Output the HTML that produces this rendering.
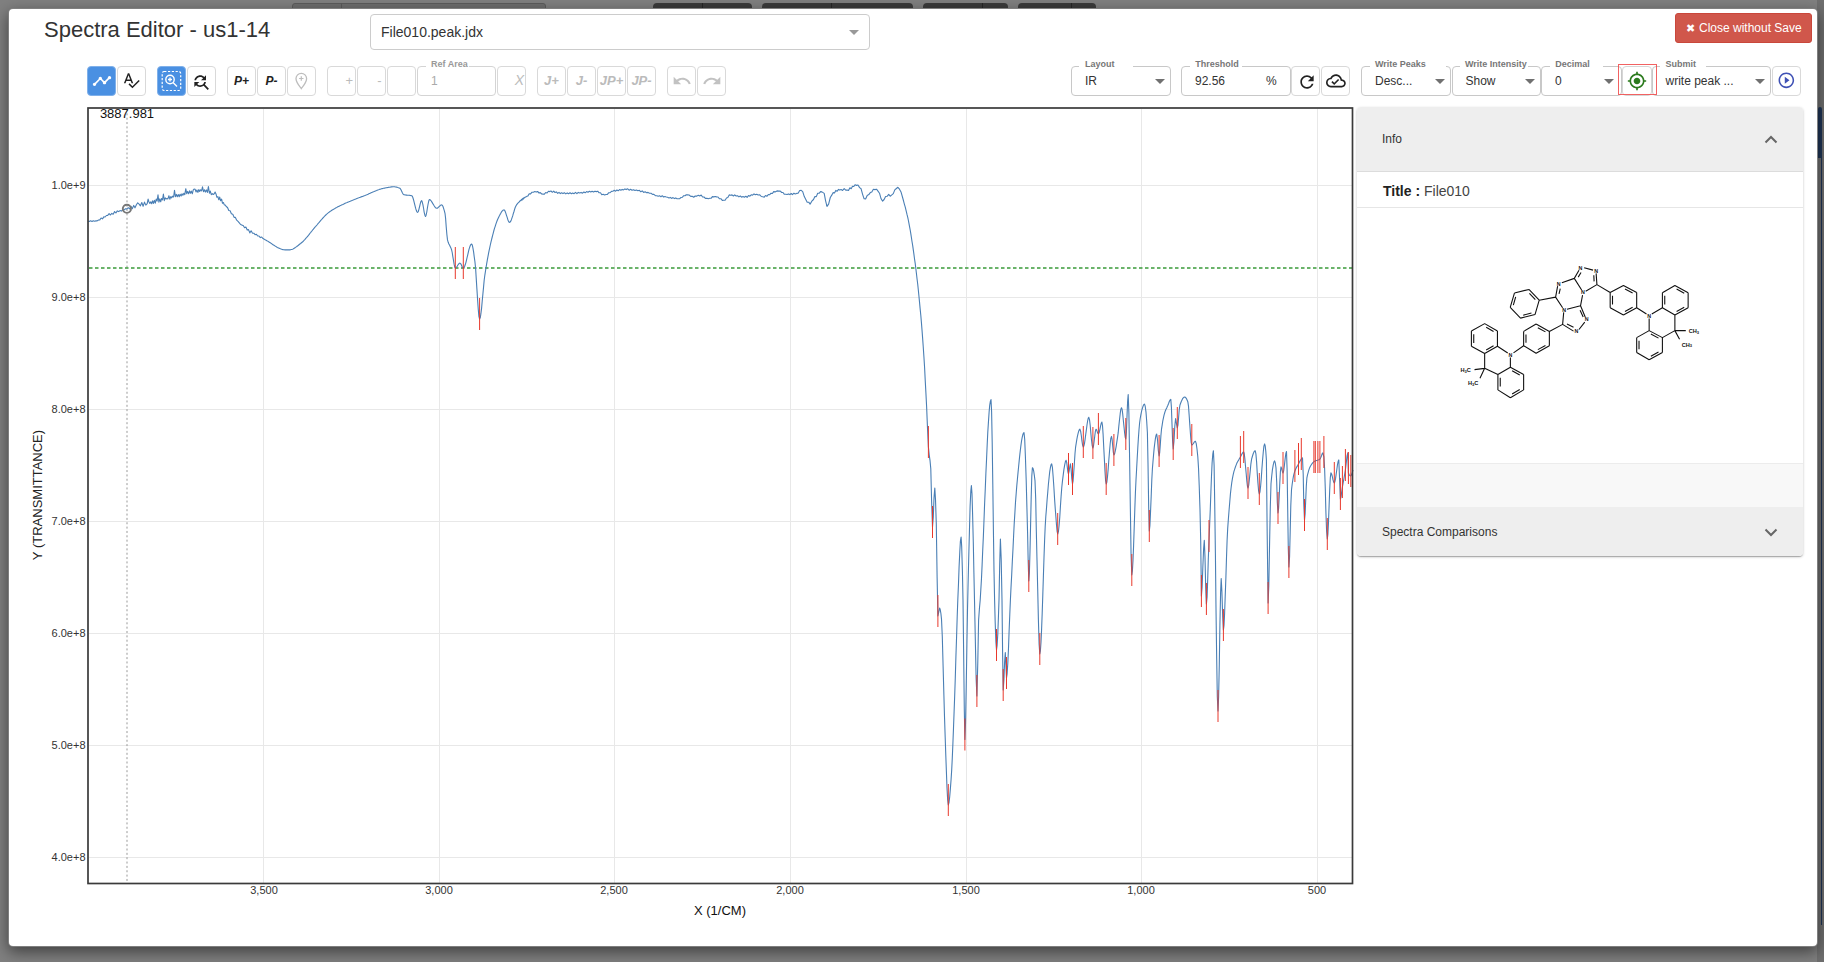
<!DOCTYPE html>
<html><head><meta charset="utf-8">
<style>
*{box-sizing:border-box}
html,body{margin:0;padding:0;width:1824px;height:962px;overflow:hidden}
body{background:#808080;font-family:"Liberation Sans",sans-serif;position:relative;color:#333}
.a{position:absolute}
.tab{position:absolute;top:3px;height:8px;background:#3b3b3b;border-radius:4px 4px 0 0}
.modal{position:absolute;left:8px;top:8px;width:1810px;height:939px;background:#fff;border-radius:5px;border:1px solid rgba(0,0,0,.5);box-shadow:0 5px 15px rgba(0,0,0,.5)}
.btn{position:absolute;top:66px;width:29px;height:29.5px;border:1px solid #d9d9d9;border-radius:4px;background:#fff}
.btn.on{background:#4a90e2;border-color:#7fb0ea}
.bt{position:absolute;left:0;top:0;width:100%;height:100%;display:flex;align-items:center;justify-content:center;font-weight:bold;font-style:italic;font-size:13px}
.fld{position:absolute;top:66px;height:29.5px;border:1px solid #c8c8c8;border-radius:4px;background:#fff}
.lbl{position:absolute;top:-9px;font-size:9px;font-weight:bold;color:#777;line-height:12px;white-space:nowrap}
.gap{position:absolute;top:-1.5px;height:3px;background:#fff}
.val{position:absolute;top:7px;font-size:12px;color:#333;line-height:14px;white-space:nowrap}
.caret{position:absolute;top:12px;width:0;height:0;border-left:5px solid transparent;border-right:5px solid transparent;border-top:5px solid #707070}
.ytick{position:absolute;font-size:11px;color:#333;text-align:right;width:61.5px;line-height:12px}
.xtick{position:absolute;top:884.3px;font-size:11px;color:#333;text-align:center;width:60px;line-height:12px}
</style></head>
<body>
<!-- background page elements behind modal -->
<div class="a" style="left:292px;top:3px;width:254px;height:8px;background:#6e6e6e;border:1px solid #5c5c5c;border-radius:3px 3px 0 0"></div>
<div class="tab" style="left:653px;width:99px"></div>
<div class="tab" style="left:762px;width:151px"></div>
<div class="tab" style="left:923px;width:85px"></div>
<div class="tab" style="left:1018px;width:78px"></div>
<div class="a" style="left:341px;top:3px;width:1px;height:6px;background:#5a5a5a"></div>
<div class="a" style="left:702px;top:3px;width:1px;height:6px;background:#262626"></div>
<div class="a" style="left:831px;top:3px;width:1px;height:6px;background:#262626"></div>
<div class="a" style="left:982px;top:3px;width:1px;height:6px;background:#262626"></div>
<div class="a" style="left:1071px;top:3px;width:1px;height:6px;background:#262626"></div>
<div class="a" style="left:1817px;top:0;width:7px;height:962px;background:#6f6f6f"></div>
<div class="a" style="left:1818px;top:107px;width:4px;height:51px;background:#1f3556;border-radius:2px 2px 0 0"></div>
<div class="a" style="left:1821px;top:157px;width:1px;height:768px;background:#1f3556"></div>

<div class="modal"></div>

<!-- header -->
<div class="a" style="left:44px;top:15.5px;font-size:22px;color:#333;line-height:28px;white-space:nowrap">Spectra Editor - us1-14</div>
<div class="a" style="left:370px;top:14px;width:500px;height:36px;border:1px solid #cccccc;border-radius:4px;background:#fff">
  <div class="a" style="left:10px;top:9px;font-size:14px;color:#333;line-height:16px">File010.peak.jdx</div>
  <div class="a" style="left:478px;top:15px;width:0;height:0;border-left:5px solid transparent;border-right:5px solid transparent;border-top:5px solid #999"></div>
</div>
<div class="a" style="left:1675px;top:13px;width:137px;height:30px;background:#d0574b;border:1px solid #c9473b;border-radius:3px;color:#fff;font-size:12px;line-height:28px;white-space:nowrap">
  <span class="a" style="left:10px;top:0;font-size:11px">&#x2716;</span><span class="a" style="left:23px;top:0">Close without Save</span>
</div>

<!-- toolbar left -->
<div class="btn on" style="left:87px"><svg class="a" style="left:3.6px;top:3.6px" width="20" height="20" viewBox="0 0 24 24"><path fill="#fff" d="M23 8c0 1.1-.9 2-2 2-.18 0-.35-.02-.51-.07l-3.56 3.55c.05.16.07.34.07.52 0 1.1-.9 2-2 2s-2-.9-2-2c0-.18.02-.36.07-.52l-2.550-2.55c-.16.05-.34.07-.52.07s-.36-.02-.52-.07l-4.55 4.56c.05.16.07.33.07.51 0 1.1-.9 2-2 2s-2-.9-2-2 .9-2 2-2c.18 0 .35.02.51.07l4.56-4.55C8.02 9.36 8 9.18 8 9c0-1.1.9-2 2-2s2 .9 2 2c0 .18-.02.36-.07.52l2.55 2.55c.16-.05.34-.07.52-.07s.36.02.52.07l3.55-3.56C19.02 8.35 19 8.18 19 8c0-1.1.9-2 2-2s2 .9 2 2z"/></svg></div>
<div class="btn" style="left:117px"><svg class="a" style="left:4.3px;top:4.1px" width="18.5" height="18.5" viewBox="0 0 24 24"><path fill="#222" d="M12.45 16h2.09L9.43 3H7.57L2.46 16h2.09l1.12-3h5.64l1.14 3zm-6.02-5L8.5 5.48 10.57 11H6.43zm15.16.59l-8.09 8.09L9.83 16l-1.41 1.41 5.09 5.09L23 13l-1.41-1.41z"/></svg></div>
<div class="btn on" style="left:157px"><svg class="a" style="left:0;top:0" width="27" height="27" viewBox="0 0 27 27"><rect x="4.2" y="4.5" width="18.5" height="19" rx="2" fill="none" stroke="#fff" stroke-width="1.2" stroke-dasharray="2.2,1.6"/><circle cx="12" cy="12.5" r="4.2" fill="none" stroke="#fff" stroke-width="1.4"/><path d="M12 10.5V14.5M10 12.5H14M15 15.5L19 19.5" stroke="#fff" stroke-width="1.4"/></svg></div>
<div class="btn" style="left:187px"><svg class="a" style="left:3.1px;top:4.6px" width="20" height="20" viewBox="0 0 24 24"><path fill="#222" d="M11 6c1.38 0 2.63.56 3.54 1.46L12 10h6V4l-2.05 2.05C14.68 4.78 12.93 4 11 4c-3.53 0-6.43 2.61-6.92 6H6.1c.46-2.28 2.48-4 4.9-4zm5.64 9.14c.66-.9 1.12-1.97 1.28-3.14H15.9c-.46 2.28-2.48 4-4.900 4-1.38 0-2.63-.56-3.54-1.46L10 12H4v6l2.05-2.05C7.32 17.220 9.07 18 11 18c1.55 0 2.98-.51 4.14-1.36L20 21.49 21.49 20l-4.85-4.86z"/></svg></div>
<div class="btn" style="left:227px"><div class="bt" style="color:#222;font-size:12px">P+</div></div>
<div class="btn" style="left:257px"><div class="bt" style="color:#222;font-size:12px">P-</div></div>
<div class="btn" style="left:287px"><svg class="a" style="left:0;top:0" width="27" height="27" viewBox="0 0 27 27"><path d="M13.3 21.6C11 18.6 8 15.6 8 11.6A5.3 5.3 0 0 1 18.6 11.6C18.6 15.6 15.6 18.6 13.3 21.6Z" fill="none" stroke="#bdbdbd" stroke-width="1.3"/><path d="M13.3 9.3V13.7M11.1 11.5H15.5" stroke="#bdbdbd" stroke-width="1.2"/></svg></div>

<div class="btn" style="left:327px"><div class="a" style="right:2px;top:6px;font-size:13px;color:#bbb">+</div></div>
<div class="btn" style="left:357px"><div class="a" style="right:3.5px;top:6px;font-size:13px;color:#bbb">-</div></div>
<div class="btn" style="left:387px"></div>
<div class="fld" style="left:417px;width:79px;border-color:#d4d4d4"><div class="gap" style="left:7.8px;width:43.7px"></div><div class="lbl" style="left:13px;color:#999">Ref Area</div><div class="val" style="left:13px;color:#aaa">1</div></div>
<div class="btn" style="left:497px"><div class="a" style="right:1px;top:5px;font-size:14px;color:#bbb;font-style:italic">X</div></div>

<div class="btn" style="left:537px"><div class="bt" style="color:#bbb">J+</div></div>
<div class="btn" style="left:567px"><div class="bt" style="color:#bbb">J-</div></div>
<div class="btn" style="left:597px"><div class="bt" style="color:#bbb">JP+</div></div>
<div class="btn" style="left:627px"><div class="bt" style="color:#bbb">JP-</div></div>
<div class="btn" style="left:667px"><svg class="a" style="left:3.5px;top:3.7px" width="20" height="20" viewBox="0 0 24 24"><path fill="#c2c2c2" d="M12.5 8c-2.65 0-5.05.99-6.9 2.6L2 7v9h9l-3.62-3.62c1.39-1.16 3.16-1.88 5.12-1.88 3.54 0 6.55 2.31 7.6 5.5l2.37-.78C21.08 11.03 17.15 8 12.5 8z"/></svg></div>
<div class="btn" style="left:697px"><svg class="a" style="left:3.5px;top:3.7px" width="20" height="20" viewBox="0 0 24 24"><path fill="#c2c2c2" d="M18.4 10.6C16.55 8.99 14.15 8 11.5 8c-4.65 0-8.58 3.03-9.96 7.22L3.9 16c1.05-3.19 4.05-5.5 7.6-5.5 1.95 0 3.73.72 5.12 1.88L13 16h9V7l-3.6 3.6z"/></svg></div>

<!-- toolbar right -->
<div class="fld" style="left:1071px;width:100px"><div class="gap" style="left:7.2px;width:53.5px"></div><div class="lbl" style="left:13px">Layout</div><div class="val" style="left:13px">IR</div><div class="caret" style="left:82.5px"></div></div>
<div class="fld" style="left:1181px;width:110px"><div class="gap" style="left:8px;width:51.7px"></div><div class="lbl" style="left:13.3px">Threshold</div><div class="val" style="left:13px">92.56</div><div class="val" style="left:84px">%</div></div>
<div class="btn" style="left:1291px"><svg class="a" style="left:4.7px;top:4.7px" width="20" height="20" viewBox="0 0 24 24"><path fill="#222" d="M17.65 6.35C16.2 4.9 14.21 4 12 4c-4.42 0-7.99 3.58-7.99 8s3.57 8 7.99 8c3.73 0 6.840-2.55 7.73-6h-2.08c-.82 2.33-3.04 4-5.650 4-3.31 0-6-2.69-6-6s2.690-6 6-6c1.66 0 3.14.69 4.22 1.78L13 11h7V4l-2.350 2.35z"/></svg></div>
<div class="btn" style="left:1321px"><svg class="a" style="left:4.4px;top:3.9px" width="19.8" height="19.8" viewBox="0 0 24 24"><path fill="#222" d="M19.35 10.04C18.67 6.59 15.64 4 12 4 9.11 4 6.6 5.64 5.35 8.04 2.34 8.36 0 10.91 0 14c0 3.31 2.69 6 6 6h13c2.76 0 5-2.24 5-5 0-2.64-2.050-4.78-4.650-4.96zM19 18H6c-2.21 0-4-1.79-4-4 0-2.05 1.53-3.76 3.56-3.97l1.07-.11.5-.95C8.08 7.14 9.94 6 12 6c2.62 0 4.88 1.86 5.39 4.43l.3 1.5 1.53.11c1.56.1 2.78 1.41 2.78 2.96 0 1.65-1.35 3-3 3zm-9-3.82l-2.09-2.09L6.5 13.5 10 17l6.01-6.01-1.41-1.41z"/></svg></div>

<div class="fld" style="left:1361px;width:90px"><div class="gap" style="left:7.8px;width:76.5px"></div><div class="lbl" style="left:13px">Write Peaks</div><div class="val" style="left:13px">Desc...</div><div class="caret" style="left:72.8px"></div></div>
<div class="fld" style="left:1451.5px;width:89px"><div class="gap" style="left:7.8px;width:68.2px"></div><div class="lbl" style="left:12.5px">Write Intensity</div><div class="val" style="left:13px">Show</div><div class="caret" style="left:72px"></div></div>
<div class="fld" style="left:1541px;width:81px"><div class="gap" style="left:7.9px;width:53.5px"></div><div class="lbl" style="left:13.2px">Decimal</div><div class="val" style="left:13px">0</div><div class="caret" style="left:62.2px"></div></div>
<div class="fld" style="left:1652px;width:119px"><div class="gap" style="left:7px;width:46.2px"></div><div class="lbl" style="left:12.5px">Submit</div><div class="val" style="left:12.5px">write peak ...</div><div class="caret" style="left:102px"></div></div>
<div class="btn" style="left:1621.5px;width:30px;border-color:#d6d6d6"><svg class="a" style="left:4.2px;top:3.7px" width="20" height="20" viewBox="0 0 24 24"><path fill="#2b7a1d" d="M12 8c-2.21 0-4 1.79-4 4s1.79 4 4 4 4-1.79 4-4-1.79-4-4-4zm8.94 3c-.46-4.17-3.77-7.48-7.94-7.94V1h-2v2.06C6.83 3.52 3.52 6.83 3.06 11H1v2h2.06c.46 4.17 3.77 7.48 7.94 7.94V23h2v-2.06c4.17-.46 7.48-3.77 7.94-7.94H23v-2h-2.06zM12 19c-3.87 0-7-3.13-7-7s3.13-7 7-7 7 3.13 7 7-3.13 7-7 7z"/></svg></div>
<div class="a" style="left:1617.5px;top:64.4px;width:39px;height:30.5px;border:1.6px solid rgba(240,70,70,.85)"></div>
<div class="btn" style="left:1772px"><svg class="a" style="left:4px;top:4.3px" width="18.7" height="18.7" viewBox="0 0 24 24"><path fill="#3f51b5" d="M10 16.5l6-4.5-6-4.5v9zM12 2C6.48 2 2 6.48 2 12s4.48 10 10 10 10-4.48 10-10S17.52 2 12 2zm0 18c-4.41 0-8-3.59-8-8s3.590-8 8-8 8 3.59 8 8-3.59 8-8 8z"/></svg></div>

<!-- chart -->
<svg class="a" style="left:0;top:0" width="1824" height="962">
  <g stroke="#e8e8e8" stroke-width="1">
    <path d="M89 185.5H1352M89 297.5H1352M89 409.5H1352M89 521.5H1352M89 633.5H1352M89 745.5H1352M89 857.5H1352"/>
    <path d="M263.5 109V883M439.5 109V883M614.5 109V883M790.5 109V883M966.5 109V883M1141.5 109V883M1317.5 109V883"/>
  </g>
  <path d="M127 109V883" stroke="#999" stroke-width="1" stroke-dasharray="2,2.35"/>
  <path d="M89 268H1352" stroke="#3a9a3a" stroke-width="1.3" stroke-dasharray="3.5,2.5"/>
  <path d="M88.0 221.3 L89.3 221.4 L90.6 220.8 L92.0 221.5 L93.3 220.7 L94.6 221.2 L95.9 220.9 L97.2 220.9 L98.5 220.0 L99.8 219.9 L101.1 218.0 L102.5 218.9 L103.8 216.9 L105.1 217.0 L106.4 215.5 L107.7 215.4 L109.1 213.7 L110.4 215.0 L111.8 213.4 L113.2 214.2 L114.6 211.5 L115.9 213.0 L117.3 210.9 L118.7 211.6 L120.0 210.6 L121.4 211.1 L122.8 209.7 L124.2 209.9 L125.5 208.7 L126.9 208.9 L128.3 207.7 L129.6 208.9 L131.0 206.2 L132.3 208.8 L133.7 205.4 L135.0 207.8 L136.4 204.7 L137.7 202.8 L139.1 204.1 L140.4 205.8 L141.8 202.5 L143.1 206.3 L144.5 202.1 L145.8 205.1 L147.2 203.6 L148.1 199.1 L149.0 202.0 L149.9 203.4 L150.8 201.8 L151.7 203.8 L152.6 200.8 L153.5 203.4 L154.4 200.3 L155.3 203.2 L156.2 199.1 L157.1 201.1 L158.0 194.9 L158.9 202.2 L159.8 198.8 L160.7 201.8 L161.6 198.5 L162.5 199.9 L163.4 194.0 L164.3 200.6 L165.2 197.8 L166.1 199.0 L167.0 198.6 L167.9 198.9 L168.9 195.7 L169.8 199.2 L170.8 196.6 L171.7 197.8 L172.6 196.2 L173.6 197.0 L174.5 190.4 L175.4 196.7 L176.4 194.4 L177.3 196.7 L178.3 194.6 L179.2 196.7 L180.1 194.2 L181.1 196.1 L182.0 193.8 L182.9 195.3 L183.9 193.2 L184.8 194.6 L185.8 188.7 L186.7 193.7 L187.6 191.4 L188.6 193.8 L189.5 190.8 L190.4 193.2 L191.3 191.1 L192.3 193.8 L193.2 190.2 L194.1 189.0 L195.1 189.2 L196.0 191.9 L196.9 190.0 L197.9 192.4 L198.8 189.6 L199.7 191.4 L200.6 189.8 L201.6 190.9 L202.5 186.8 L203.5 191.7 L204.5 189.7 L205.4 192.1 L206.4 189.9 L207.4 192.4 L208.4 186.6 L209.4 193.2 L210.3 191.1 L211.3 194.7 L212.3 193.7 L213.2 194.5 L214.2 193.7 L215.1 192.1 L216.0 193.9 L216.9 197.3 L217.9 196.6 L218.8 199.8 L219.7 197.1 L220.6 200.8 L221.6 199.1 L222.5 203.3 L223.4 202.5 L224.3 204.9 L225.3 205.0 L226.2 206.5 L227.5 207.5 L228.8 210.5 L230.1 210.7 L231.4 213.7 L232.8 214.2 L234.1 217.4 L235.4 217.4 L236.7 220.2 L238.0 221.3 L239.3 222.8 L240.6 224.5 L241.9 225.1 L243.2 225.5 L244.6 227.8 L245.9 227.1 L247.2 229.9 L248.5 229.6 L249.8 232.9 L251.1 230.8 L252.4 233.1 L253.8 233.2 L255.1 234.7 L256.4 234.3 L257.7 236.0 L259.0 236.0 L260.3 237.6 L261.7 237.0 L263.0 238.6 L264.3 239.3 L265.6 240.0 L266.2 240.3 L266.8 240.7 L267.5 241.0 L268.1 241.4 L268.7 241.8 L269.3 242.2 L269.9 242.6 L270.6 243.0 L271.2 243.4 L271.8 243.8 L272.4 244.3 L273.0 244.7 L273.6 245.1 L274.3 245.5 L274.9 245.9 L275.5 246.3 L276.1 246.6 L276.7 247.0 L277.4 247.4 L278.0 247.7 L278.6 248.0 L279.2 248.3 L279.8 248.6 L280.4 248.8 L281.1 249.1 L281.7 249.3 L282.3 249.5 L282.9 249.6 L283.5 249.7 L284.2 249.8 L284.8 249.9 L285.4 249.9 L286.0 249.9 L286.7 249.9 L287.4 249.9 L288.0 249.9 L288.6 249.9 L289.3 249.9 L289.9 249.9 L290.6 249.8 L291.2 249.6 L291.8 249.4 L292.4 249.2 L293.1 248.9 L293.7 248.6 L294.3 248.2 L294.9 247.8 L295.6 247.4 L296.2 246.9 L296.8 246.5 L297.4 246.0 L298.1 245.5 L298.7 245.0 L299.3 244.5 L299.9 244.0 L300.6 243.5 L301.2 243.0 L301.8 242.5 L302.4 242.0 L303.0 241.5 L303.6 240.9 L304.2 240.2 L304.8 239.6 L305.4 238.9 L306.0 238.2 L306.6 237.5 L307.2 236.8 L307.8 236.1 L308.4 235.3 L309.0 234.6 L309.6 233.8 L310.2 233.0 L310.8 232.3 L311.4 231.5 L312.0 230.8 L312.6 230.0 L313.2 229.3 L313.8 228.6 L314.4 227.9 L315.0 227.2 L315.6 226.5 L316.2 225.8 L316.8 225.2 L317.4 224.5 L318.0 223.7 L318.6 223.0 L319.2 222.3 L319.8 221.6 L320.4 220.9 L321.0 220.2 L321.6 219.5 L322.2 218.8 L322.8 218.1 L323.4 217.5 L324.0 216.8 L324.6 216.2 L325.2 215.6 L325.8 215.0 L326.4 214.4 L327.0 213.9 L327.6 213.3 L328.2 212.9 L328.8 212.4 L329.4 212.0 L330.0 211.5 L330.6 211.1 L331.2 210.7 L331.8 210.3 L332.4 209.9 L333.1 209.5 L333.7 209.2 L334.3 208.8 L334.9 208.5 L335.5 208.1 L336.1 207.8 L336.7 207.5 L337.3 207.1 L337.9 206.8 L338.5 206.5 L339.1 206.2 L339.7 205.9 L340.3 205.6 L341.0 205.3 L341.6 205.0 L342.2 204.7 L342.8 204.5 L343.4 204.2 L344.0 203.9 L344.6 203.6 L345.2 203.3 L345.8 203.0 L346.4 202.8 L347.1 202.5 L347.7 202.2 L348.3 201.9 L348.9 201.7 L349.5 201.4 L350.1 201.2 L350.8 200.9 L351.4 200.7 L352.0 200.4 L352.6 200.2 L353.2 199.9 L353.8 199.7 L354.5 199.5 L355.1 199.2 L355.7 199.0 L356.3 198.7 L356.9 198.5 L357.5 198.3 L358.1 198.0 L358.8 197.8 L359.4 197.6 L360.0 197.4 L360.6 197.1 L361.2 196.9 L361.8 196.6 L362.5 196.4 L363.1 196.2 L363.7 195.9 L364.3 195.7 L364.9 195.5 L365.5 195.2 L366.1 195.0 L366.8 194.7 L367.4 194.4 L368.0 194.2 L368.6 193.9 L369.2 193.6 L369.8 193.4 L370.5 193.1 L371.1 192.8 L371.7 192.5 L372.3 192.3 L372.9 192.0 L373.5 191.7 L374.1 191.5 L374.8 191.2 L375.4 191.0 L376.0 190.7 L376.6 190.5 L377.2 190.2 L377.8 190.0 L378.5 189.8 L379.1 189.6 L379.7 189.3 L380.3 189.2 L380.9 189.0 L381.5 188.8 L382.2 188.6 L382.8 188.5 L383.4 188.3 L384.0 188.2 L384.6 188.1 L385.2 188.0 L385.9 187.8 L386.5 187.7 L387.1 187.6 L387.7 187.5 L388.3 187.4 L388.9 187.3 L389.6 187.2 L390.2 187.1 L390.8 187.0 L391.4 186.9 L392.0 186.9 L392.7 186.8 L393.3 186.8 L393.9 186.8 L394.6 186.8 L395.2 186.9 L395.9 187.0 L396.5 187.1 L397.2 187.3 L397.8 187.5 L398.5 187.7 L399.1 187.9 L399.8 188.2 L400.5 188.9 L401.1 190.1 L401.8 191.5 L402.5 193.0 L403.1 194.1 L403.8 194.7 L404.4 194.8 L405.0 194.9 L405.6 195.0 L406.2 195.1 L406.8 195.1 L407.4 195.2 L408.1 195.2 L408.7 195.3 L409.3 195.3 L409.9 195.4 L410.5 195.5 L411.1 195.6 L411.7 195.7 L412.4 196.4 L413.0 198.0 L413.7 200.3 L414.3 202.9 L415.0 205.6 L415.6 208.2 L416.3 210.3 L416.9 211.8 L417.6 212.4 L418.3 211.5 L418.9 209.3 L419.6 206.5 L420.3 203.7 L420.9 201.5 L421.6 200.6 L422.2 201.8 L422.9 204.7 L423.6 208.5 L424.2 212.3 L424.9 215.2 L425.5 216.4 L426.1 215.2 L426.8 212.0 L427.4 208.0 L428.1 204.0 L428.8 200.8 L429.4 199.6 L430.0 199.8 L430.6 200.2 L431.2 201.0 L431.8 201.9 L432.4 202.9 L433.0 203.9 L433.7 205.0 L434.3 206.0 L434.9 206.9 L435.5 207.7 L436.1 208.1 L436.7 208.3 L437.3 208.2 L437.9 207.8 L438.5 207.2 L439.1 206.6 L439.8 206.0 L440.4 205.4 L441.0 205.0 L441.6 204.9 L442.3 205.3 L443.0 206.5 L443.6 208.3 L444.3 210.6 L445.0 213.3 L445.6 218.4 L446.2 226.6 L446.9 234.8 L447.5 239.9 L448.2 242.3 L448.9 244.0 L449.6 245.3 L450.2 246.5 L450.9 247.9 L451.6 249.8 L452.2 252.5 L452.8 256.3 L453.5 260.4 L454.1 264.2 L454.7 266.9 L455.3 268.0 L456.0 267.7 L456.6 267.0 L457.3 266.1 L457.9 265.0 L458.6 264.1 L459.2 263.4 L459.9 263.1 L460.6 263.6 L461.3 264.8 L461.9 266.3 L462.6 267.5 L463.3 268.0 L463.9 267.6 L464.6 266.5 L465.2 264.8 L465.9 262.6 L466.5 260.1 L467.1 257.4 L467.8 254.6 L468.4 251.9 L469.0 249.4 L469.7 247.2 L470.3 245.5 L471.0 244.4 L471.6 244.0 L472.3 245.1 L472.9 247.9 L473.6 251.9 L474.2 256.6 L474.9 261.5 L475.6 268.3 L476.2 277.9 L476.9 288.9 L477.6 299.9 L478.3 309.6 L478.9 316.4 L479.6 319.0 L480.3 317.6 L480.9 313.7 L481.6 308.1 L482.2 301.2 L482.9 293.9 L483.6 286.6 L484.2 280.0 L484.9 274.8 L485.5 271.0 L486.1 267.2 L486.7 263.7 L487.3 260.2 L487.9 256.9 L488.5 253.7 L489.1 250.7 L489.7 247.8 L490.3 245.0 L490.9 242.4 L491.5 239.9 L492.1 237.5 L492.7 235.1 L493.3 232.8 L493.9 230.5 L494.5 228.4 L495.2 226.3 L495.8 224.4 L496.4 222.6 L497.0 221.0 L497.6 219.5 L498.2 218.2 L498.8 216.9 L499.5 215.6 L500.1 214.4 L500.8 213.2 L501.4 212.1 L502.1 211.2 L502.7 210.5 L503.4 210.1 L504.0 209.9 L504.6 210.3 L505.2 211.5 L505.8 213.1 L506.4 215.1 L507.1 217.2 L507.7 219.2 L508.3 220.8 L508.9 222.0 L509.5 222.4 L510.1 222.1 L510.8 221.1 L511.4 219.7 L512.0 217.9 L512.7 215.9 L513.3 213.7 L514.0 211.5 L514.6 209.4 L515.2 207.5 L515.9 206.0 L516.5 204.9 L517.1 204.1 L517.7 203.4 L518.4 202.7 L519.0 202.1 L519.6 201.5 L520.2 200.6 L520.8 200.7 L521.5 199.2 L522.1 200.1 L522.7 198.4 L523.3 199.1 L523.9 197.6 L524.5 197.9 L525.2 197.1 L525.8 197.0 L526.4 196.6 L527.8 196.1 L529.2 193.8 L530.6 193.9 L532.0 192.2 L533.4 192.2 L534.8 191.6 L536.2 192.1 L537.6 191.5 L539.0 193.0 L540.3 192.6 L541.7 194.0 L543.1 194.1 L544.4 194.2 L545.7 192.5 L547.1 193.0 L548.4 191.2 L549.7 191.6 L551.0 191.0 L552.4 192.3 L553.7 191.2 L555.0 192.5 L556.4 191.9 L557.7 193.4 L559.0 192.4 L560.3 193.6 L561.7 192.8 L563.0 193.6 L564.4 192.8 L565.8 193.9 L567.2 192.9 L568.6 193.7 L570.0 192.8 L571.4 193.8 L572.7 193.0 L574.1 193.7 L575.5 192.4 L576.9 193.7 L578.3 192.4 L579.7 193.0 L581.1 192.4 L582.5 193.2 L583.9 192.0 L585.2 192.8 L586.6 191.6 L588.0 192.3 L589.4 191.3 L590.8 191.9 L592.1 191.2 L593.5 192.0 L594.9 191.2 L596.3 191.6 L597.7 191.2 L599.1 192.8 L600.5 192.7 L601.8 194.7 L603.2 194.3 L604.6 195.0 L606.0 194.5 L607.4 194.4 L608.8 192.7 L610.1 192.6 L611.5 191.4 L612.9 191.3 L614.2 190.2 L615.6 191.2 L616.9 190.0 L618.2 190.8 L619.5 189.6 L620.9 190.3 L622.2 189.4 L623.5 189.9 L624.9 188.9 L626.2 189.6 L627.7 188.8 L629.1 190.2 L630.6 189.3 L632.0 190.3 L633.5 189.7 L635.0 190.5 L636.4 190.0 L637.9 190.8 L639.4 190.3 L640.8 191.8 L642.2 190.9 L643.7 192.4 L645.1 191.8 L646.6 192.7 L648.0 192.4 L649.5 193.3 L651.0 193.3 L652.5 194.4 L653.9 194.3 L655.4 195.7 L656.9 195.7 L658.2 196.2 L659.6 195.7 L660.9 196.8 L662.2 195.7 L663.6 197.0 L664.9 196.5 L666.3 197.0 L667.6 197.2 L669.0 197.9 L670.3 197.4 L671.6 198.4 L673.0 197.6 L674.4 198.6 L675.7 197.9 L677.0 198.8 L678.4 198.8 L679.7 198.7 L681.0 197.5 L682.3 197.3 L683.7 195.7 L685.0 195.8 L686.3 194.8 L687.6 194.9 L689.1 195.0 L690.7 196.4 L692.2 196.3 L693.7 197.2 L695.2 196.0 L696.8 196.1 L698.3 195.2 L699.7 195.9 L701.2 195.1 L702.6 197.0 L704.0 197.0 L705.4 198.4 L706.9 198.2 L708.3 198.8 L709.7 198.3 L711.1 198.3 L712.4 196.6 L713.8 196.9 L715.2 196.5 L716.6 196.9 L718.0 197.0 L719.5 198.8 L720.9 198.7 L722.3 200.4 L723.7 200.3 L725.1 200.2 L726.5 198.0 L727.8 197.5 L729.2 194.9 L730.6 195.2 L732.0 194.9 L733.4 196.0 L734.7 194.9 L736.1 196.0 L737.5 195.7 L738.9 196.9 L740.3 196.0 L741.6 197.2 L743.0 196.5 L744.4 197.2 L745.8 196.3 L747.1 197.3 L748.5 195.6 L749.9 196.2 L751.2 194.8 L752.6 195.1 L754.0 193.9 L755.3 194.8 L756.7 194.2 L758.2 195.0 L759.8 194.8 L761.3 196.5 L762.8 196.8 L764.2 197.2 L765.5 195.5 L766.9 196.3 L768.3 194.5 L769.6 194.8 L771.0 193.2 L772.4 193.5 L773.7 191.6 L775.1 191.9 L777.0 190.9 L778.9 191.1 L780.3 191.1 L781.7 192.5 L783.0 192.5 L784.4 194.3 L785.8 194.2 L787.1 194.5 L788.5 193.9 L789.9 194.6 L791.2 193.5 L792.5 194.6 L793.9 193.2 L795.2 193.9 L796.6 193.4 L798.1 193.2 L799.7 190.5 L801.2 190.3 L802.7 191.6 L804.3 196.6 L805.8 199.5 L807.2 202.2 L808.7 202.2 L810.1 204.1 L811.8 201.2 L813.5 199.5 L814.9 196.6 L816.3 196.6 L817.7 193.2 L819.1 193.3 L820.5 191.6 L821.9 191.9 L824.2 193.4 L825.6 200.8 L827.0 206.4 L828.6 204.1 L830.3 197.5 L831.9 194.9 L833.2 192.6 L834.5 193.0 L835.8 190.4 L837.2 191.2 L838.5 189.4 L839.8 190.1 L841.1 189.6 L842.6 190.4 L844.2 188.6 L845.7 190.1 L847.2 190.0 L848.5 190.5 L849.9 187.8 L851.2 188.7 L852.5 186.3 L853.8 186.5 L855.2 184.7 L856.5 185.4 L858.0 185.0 L859.6 187.6 L861.1 188.8 L862.6 194.3 L864.1 198.8 L865.6 198.9 L867.2 195.4 L868.8 194.6 L870.3 192.6 L871.8 192.0 L873.4 189.2 L874.9 189.6 L876.5 189.2 L878.0 191.1 L879.5 193.2 L881.1 198.8 L882.6 201.1 L884.1 199.5 L885.6 196.5 L887.1 196.3 L888.7 194.4 L890.2 196.2 L891.8 194.9 L893.3 193.6 L894.8 189.9 L896.4 188.5 L897.9 187.3 L899.5 189.2 L901.0 191.9 L903.3 200.0 L903.9 202.3 L904.5 204.6 L905.2 206.9 L905.8 209.3 L906.4 211.8 L907.0 214.4 L907.7 217.1 L908.3 220.0 L908.9 223.1 L909.5 226.4 L910.2 230.0 L910.8 233.7 L911.4 237.5 L912.0 241.5 L912.7 245.7 L913.3 249.9 L913.9 254.2 L914.5 258.7 L915.2 263.4 L915.8 268.2 L916.4 273.3 L917.0 278.5 L917.7 284.0 L918.3 289.8 L918.9 295.7 L919.5 301.9 L920.1 308.4 L920.8 315.2 L921.4 322.4 L922.0 329.9 L922.6 337.9 L923.2 346.3 L923.9 356.5 L924.6 367.7 L925.2 379.9 L925.9 392.8 L926.6 406.2 L927.5 428.1 L928.4 447.0 L929.2 454.8 L930.0 460.3 L930.8 468.9 L931.6 501.1 L932.5 527.0 L933.3 516.9 L934.0 498.1 L934.8 488.0 L935.5 499.6 L936.3 523.9 L937.1 576.7 L937.9 616.0 L938.8 612.0 L939.6 608.0 L940.2 609.5 L940.9 613.5 L941.5 619.1 L942.3 636.7 L943.1 666.2 L943.9 695.6 L944.5 716.6 L945.2 737.4 L945.8 755.4 L946.4 771.8 L947.0 787.9 L947.7 800.1 L948.3 805.0 L949.0 802.7 L949.7 796.7 L950.4 788.4 L951.1 779.3 L951.7 769.9 L952.3 757.8 L952.9 743.6 L953.5 728.0 L954.1 711.8 L954.7 695.6 L955.3 677.4 L955.9 657.1 L956.6 636.3 L957.2 616.7 L957.8 600.0 L958.5 583.5 L959.1 566.6 L959.8 551.7 L960.4 541.1 L961.1 537.0 L961.7 546.9 L962.4 570.8 L963.0 600.0 L963.6 649.0 L964.3 709.8 L964.9 739.5 L965.5 724.1 L966.2 687.6 L966.9 644.7 L967.5 610.0 L968.1 583.0 L968.8 554.9 L969.5 528.6 L970.1 506.5 L970.8 491.3 L971.4 485.6 L972.0 493.7 L972.6 514.4 L973.3 542.6 L973.9 572.8 L974.5 600.0 L975.3 638.6 L976.1 677.9 L976.9 696.0 L977.8 662.1 L978.6 620.0 L979.4 609.0 L980.2 600.0 L980.8 590.0 L981.5 578.2 L982.1 565.1 L982.7 550.8 L983.4 535.6 L984.0 520.0 L984.6 504.1 L985.3 488.3 L985.9 472.9 L986.6 458.2 L987.2 444.5 L987.8 432.0 L988.5 421.1 L989.1 412.2 L989.7 405.4 L990.4 401.1 L991.0 399.6 L991.6 411.6 L992.2 442.4 L992.8 484.3 L993.4 529.7 L994.0 570.8 L994.6 600.0 L995.2 622.7 L995.9 641.9 L996.5 650.0 L997.1 645.5 L997.8 633.9 L998.4 617.8 L999.0 600.0 L999.7 564.5 L1000.4 539.0 L1001.2 559.2 L1002.0 600.0 L1002.6 652.7 L1003.2 690.0 L1003.9 680.3 L1004.6 662.3 L1005.3 652.6 L1005.9 665.3 L1006.5 678.0 L1007.1 673.9 L1007.8 663.3 L1008.5 648.2 L1009.1 631.2 L1009.8 614.3 L1010.4 600.0 L1011.0 587.6 L1011.7 574.7 L1012.3 561.7 L1013.0 548.7 L1013.6 536.0 L1014.2 523.9 L1014.9 512.6 L1015.5 502.2 L1016.2 493.2 L1016.8 485.6 L1017.4 479.3 L1018.0 472.9 L1018.6 466.7 L1019.2 460.6 L1019.8 454.9 L1020.4 449.6 L1021.0 444.9 L1021.6 440.7 L1022.2 437.3 L1022.8 434.8 L1023.4 433.2 L1024.0 432.6 L1024.7 439.2 L1025.4 456.4 L1026.2 480.4 L1026.9 507.3 L1027.6 533.4 L1028.2 562.3 L1028.8 581.0 L1029.4 572.6 L1030.0 551.6 L1030.6 524.4 L1031.2 497.1 L1031.8 476.1 L1032.4 467.7 L1033.1 468.6 L1033.7 471.2 L1034.3 475.2 L1035.0 480.6 L1035.7 498.5 L1036.3 529.9 L1037.0 560.0 L1037.7 589.1 L1038.4 619.8 L1039.1 644.1 L1039.8 654.0 L1040.4 650.8 L1041.0 642.2 L1041.6 629.1 L1042.2 613.0 L1042.8 594.9 L1043.4 576.0 L1044.0 557.5 L1044.6 540.6 L1045.2 526.6 L1045.8 516.5 L1046.5 508.1 L1047.1 499.7 L1047.8 491.7 L1048.4 484.2 L1049.1 477.5 L1049.7 471.9 L1050.4 467.6 L1051.0 464.9 L1051.7 463.9 L1052.4 467.3 L1053.1 476.0 L1053.9 487.5 L1054.6 499.4 L1055.3 509.3 L1055.9 517.0 L1056.5 525.0 L1057.1 531.4 L1057.7 534.0 L1058.4 531.7 L1059.1 525.5 L1059.8 516.7 L1060.4 506.6 L1061.1 496.3 L1061.8 487.3 L1062.5 480.6 L1063.2 475.1 L1063.9 469.6 L1064.7 464.9 L1065.4 461.6 L1066.1 460.3 L1066.7 462.4 L1067.3 467.1 L1067.9 471.9 L1068.5 474.0 L1069.1 471.4 L1069.8 466.5 L1070.4 463.9 L1071.1 469.1 L1071.8 478.8 L1072.5 484.0 L1073.1 480.8 L1073.7 472.9 L1074.4 463.0 L1075.0 453.5 L1075.6 447.2 L1076.2 443.3 L1076.8 439.6 L1077.4 436.3 L1078.1 433.4 L1078.7 431.2 L1079.3 429.7 L1079.9 429.2 L1080.6 431.1 L1081.3 435.5 L1081.9 440.7 L1082.6 445.1 L1083.3 447.0 L1083.9 446.0 L1084.5 443.3 L1085.1 439.3 L1085.7 434.6 L1086.4 429.7 L1087.0 425.0 L1087.6 421.0 L1088.2 418.3 L1088.8 417.3 L1089.5 419.6 L1090.2 425.3 L1090.8 432.6 L1091.5 440.0 L1092.2 445.7 L1092.9 448.0 L1093.5 446.0 L1094.1 441.4 L1094.8 435.8 L1095.4 431.2 L1096.0 429.2 L1096.6 429.9 L1097.2 431.6 L1097.8 433.2 L1098.4 434.0 L1099.1 432.8 L1099.8 429.8 L1100.5 426.3 L1101.2 423.3 L1101.9 422.1 L1102.5 425.5 L1103.1 434.4 L1103.7 446.5 L1104.4 459.6 L1105.0 471.7 L1105.6 480.6 L1106.2 484.0 L1106.9 482.0 L1107.5 476.6 L1108.2 468.9 L1108.8 460.2 L1109.5 451.5 L1110.2 443.8 L1110.8 438.4 L1111.5 436.4 L1112.1 439.3 L1112.7 445.7 L1113.3 452.1 L1113.9 455.0 L1114.6 453.9 L1115.3 450.9 L1116.1 446.8 L1116.8 442.1 L1117.5 437.6 L1118.2 432.7 L1118.8 426.4 L1119.5 419.7 L1120.2 413.7 L1120.8 409.4 L1121.5 407.7 L1122.1 409.4 L1122.7 413.9 L1123.3 420.0 L1124.0 426.7 L1124.6 432.8 L1125.2 437.3 L1125.8 439.0 L1126.4 432.1 L1127.0 416.8 L1127.6 401.5 L1128.2 394.6 L1128.9 413.4 L1129.6 458.1 L1130.4 511.5 L1131.1 556.2 L1131.8 575.0 L1132.4 571.0 L1133.0 560.5 L1133.6 545.4 L1134.2 527.8 L1134.8 509.7 L1135.4 493.1 L1136.0 480.0 L1136.6 469.2 L1137.2 458.3 L1137.8 447.8 L1138.4 438.1 L1139.0 429.7 L1139.6 423.0 L1140.2 418.5 L1140.8 415.2 L1141.4 412.2 L1142.0 409.5 L1142.7 407.3 L1143.3 405.6 L1143.9 404.5 L1144.5 404.1 L1145.2 406.2 L1146.0 412.1 L1146.7 421.2 L1147.4 432.8 L1148.0 463.2 L1148.7 508.0 L1149.3 531.0 L1149.9 525.7 L1150.5 512.6 L1151.2 495.9 L1151.8 479.9 L1152.4 468.7 L1153.0 461.5 L1153.6 454.4 L1154.2 447.9 L1154.9 442.3 L1155.5 437.9 L1156.1 435.0 L1156.7 434.0 L1157.5 439.7 L1158.3 450.3 L1159.1 456.0 L1159.7 452.6 L1160.3 444.7 L1160.9 435.8 L1161.5 429.2 L1162.2 424.8 L1162.8 420.9 L1163.5 417.6 L1164.1 414.8 L1164.8 412.5 L1165.4 410.7 L1166.0 409.2 L1166.7 407.9 L1167.3 406.6 L1167.9 405.3 L1168.6 403.5 L1169.3 401.5 L1170.1 399.9 L1170.8 399.3 L1171.4 407.1 L1172.0 424.1 L1172.6 441.2 L1173.2 449.0 L1174.0 441.1 L1174.8 426.4 L1175.6 418.5 L1176.4 423.2 L1177.3 428.0 L1178.0 424.8 L1178.6 417.7 L1179.2 410.0 L1179.9 405.3 L1180.6 403.3 L1181.3 401.5 L1182.0 400.0 L1182.6 398.7 L1183.3 397.8 L1184.0 397.2 L1184.7 397.0 L1185.3 397.2 L1185.9 397.9 L1186.6 398.9 L1187.2 400.2 L1187.8 401.7 L1188.5 406.1 L1189.1 414.5 L1189.8 424.6 L1190.5 434.5 L1191.1 442.0 L1191.8 445.0 L1192.4 444.7 L1193.0 444.0 L1193.6 443.1 L1194.2 442.2 L1194.8 441.5 L1195.4 441.2 L1196.2 443.4 L1197.0 449.0 L1197.8 456.7 L1198.5 467.6 L1199.2 485.3 L1200.0 509.6 L1200.7 540.4 L1201.4 596.0 L1202.1 587.3 L1202.8 568.2 L1203.6 549.1 L1204.3 540.4 L1205.0 556.9 L1205.7 587.5 L1206.4 604.0 L1207.1 596.9 L1207.7 579.8 L1208.3 559.0 L1209.0 541.0 L1209.6 525.7 L1210.3 508.7 L1210.9 491.7 L1211.5 475.9 L1212.1 462.9 L1212.8 454.0 L1213.4 450.7 L1214.1 465.1 L1214.7 502.3 L1215.4 553.2 L1216.0 608.5 L1216.7 659.4 L1217.3 696.6 L1218.0 711.0 L1218.6 697.2 L1219.3 664.4 L1219.9 625.2 L1220.6 592.4 L1221.2 578.6 L1221.9 591.9 L1222.7 616.7 L1223.4 630.0 L1224.0 625.5 L1224.6 613.5 L1225.2 596.6 L1225.9 577.2 L1226.5 557.7 L1227.1 540.6 L1227.7 528.4 L1228.4 518.7 L1229.1 509.7 L1229.8 501.5 L1230.4 494.1 L1231.1 487.8 L1231.8 482.4 L1232.5 478.2 L1233.2 474.7 L1233.9 471.7 L1234.7 469.2 L1235.4 467.0 L1236.1 465.1 L1236.7 463.6 L1237.3 462.3 L1237.9 461.2 L1238.6 460.1 L1239.2 459.0 L1239.8 458.0 L1240.4 457.0 L1241.1 455.8 L1241.7 454.4 L1242.4 453.2 L1243.0 452.3 L1243.7 452.0 L1244.3 454.0 L1244.9 459.1 L1245.5 466.2 L1246.2 473.8 L1246.8 480.9 L1247.4 486.0 L1248.0 488.0 L1248.7 485.4 L1249.4 479.1 L1250.2 471.1 L1250.9 463.8 L1251.6 459.1 L1252.2 457.0 L1252.8 455.0 L1253.4 453.3 L1254.0 451.9 L1254.6 451.0 L1255.2 450.7 L1255.9 453.9 L1256.6 461.9 L1257.2 472.4 L1257.9 482.8 L1258.6 490.8 L1259.3 494.0 L1260.0 491.8 L1260.6 486.2 L1261.3 478.1 L1261.9 468.9 L1262.6 459.8 L1263.3 451.7 L1263.9 446.1 L1264.6 443.9 L1265.2 445.9 L1265.8 451.4 L1266.4 459.9 L1267.2 534.9 L1268.1 603.0 L1268.8 585.9 L1269.5 547.5 L1270.3 507.0 L1271.0 483.8 L1271.7 476.2 L1272.4 469.9 L1273.2 465.1 L1273.9 462.0 L1274.6 460.9 L1275.3 463.0 L1276.0 467.9 L1276.7 481.9 L1277.3 502.5 L1278.0 513.0 L1278.6 508.2 L1279.2 496.8 L1279.8 483.1 L1280.4 471.7 L1281.0 466.9 L1281.7 468.5 L1282.3 471.4 L1283.0 473.0 L1283.7 470.8 L1284.4 465.4 L1285.1 459.1 L1285.8 453.7 L1286.5 451.5 L1287.1 469.5 L1287.7 509.2 L1288.3 549.0 L1288.9 567.0 L1289.6 556.1 L1290.2 531.5 L1290.8 505.4 L1291.5 489.8 L1292.2 484.0 L1292.9 479.4 L1293.5 475.9 L1294.2 473.2 L1294.9 471.0 L1295.6 469.2 L1296.3 467.7 L1297.1 466.4 L1297.8 465.3 L1298.5 464.0 L1299.2 462.6 L1299.9 461.3 L1300.6 460.0 L1301.3 459.0 L1301.9 458.3 L1302.5 457.9 L1303.2 474.0 L1303.8 503.9 L1304.5 520.0 L1305.1 514.0 L1305.7 500.5 L1306.3 486.2 L1306.9 477.8 L1307.5 474.8 L1308.2 472.3 L1308.8 470.2 L1309.4 468.4 L1310.0 467.0 L1310.7 465.8 L1311.3 464.8 L1311.9 463.9 L1312.5 463.1 L1313.1 462.4 L1313.8 461.8 L1314.4 461.4 L1315.0 461.0 L1315.6 460.7 L1316.2 460.6 L1316.8 460.4 L1317.4 460.2 L1318.0 460.0 L1318.7 459.7 L1319.3 459.4 L1320.0 459.0 L1320.7 457.7 L1321.5 455.7 L1322.2 453.7 L1322.9 452.9 L1323.9 457.0 L1324.6 468.2 L1325.3 488.9 L1325.9 512.2 L1326.6 531.1 L1327.3 539.0 L1327.9 534.1 L1328.5 521.9 L1329.1 505.9 L1329.7 490.0 L1330.3 477.8 L1330.9 472.9 L1331.6 474.0 L1332.3 476.5 L1332.9 479.4 L1333.6 481.9 L1334.3 483.0 L1334.9 481.7 L1335.6 478.4 L1336.2 473.9 L1336.9 469.0 L1337.5 464.5 L1338.2 461.2 L1338.8 459.9 L1339.6 479.4 L1340.4 499.0 L1341.1 496.8 L1341.7 491.8 L1342.4 487.0 L1343.0 483.6 L1343.6 480.3 L1344.2 477.0 L1344.8 473.6 L1345.4 470.0 L1346.2 463.3 L1347.0 456.2 L1347.8 452.9 L1348.4 473.0 L1349.2 474.8 L1350.0 475.7 L1350.8 476.0 L1351.5 474.9 L1352.3 472.4 L1353.0 470.0" fill="none" stroke="#4a7fb5" stroke-width="1.1" stroke-linejoin="round"/>
  <path d="M455.3 247.0V279.0M463.3 247.0V279.0M479.6 298.0V330.0M928.4 426.0V458.0M932.5 506.0V538.0M937.9 595.0V627.0M948.3 784.0V816.0M964.9 718.5V750.5M976.9 675.0V707.0M996.5 629.0V661.0M1003.2 669.0V701.0M1006.5 657.0V689.0M1028.8 560.0V592.0M1039.8 633.0V665.0M1057.7 513.0V545.0M1068.5 453.0V485.0M1072.5 463.0V495.0M1083.3 426.0V458.0M1092.9 427.0V459.0M1098.4 413.0V445.0M1106.2 463.0V495.0M1113.9 434.0V466.0M1125.8 418.0V450.0M1131.8 554.0V586.0M1149.3 510.0V542.0M1159.1 435.0V467.0M1173.2 428.0V460.0M1177.3 407.0V439.0M1191.8 424.0V456.0M1201.4 575.0V607.0M1206.4 583.0V615.0M1209.0 520.0V552.0M1218.0 690.0V722.0M1223.4 609.0V641.0M1240.4 436.0V468.0M1243.7 431.0V463.0M1248.0 467.0V499.0M1259.3 473.0V505.0M1268.1 582.0V614.0M1278.0 492.0V524.0M1283.0 452.0V484.0M1288.9 546.0V578.0M1294.9 450.0V482.0M1298.5 443.0V475.0M1301.3 438.0V470.0M1304.5 499.0V531.0M1313.9 441.0V473.0M1315.3 441.0V473.0M1317.9 441.0V473.0M1319.9 441.0V473.0M1323.9 436.0V468.0M1327.3 518.0V550.0M1334.3 462.0V494.0M1340.4 478.0V510.0M1342.4 466.0V498.0M1345.4 449.0V481.0M1348.4 452.0V484.0M1350.8 455.0V487.0" fill="none" stroke="#e8392c" stroke-width="1"/>
  <circle cx="126.9" cy="208.8" r="4.1" fill="none" stroke="#777" stroke-width="1.9"/>
  <rect x="88" y="108" width="1264.5" height="775.5" fill="none" stroke="#3a3a3a" stroke-width="1.7"/>
  <text x="127" y="118" font-family="Liberation Sans" font-size="13" text-anchor="middle" fill="#111">3887.981</text>
  <text x="720" y="915" font-family="Liberation Sans" font-size="13" text-anchor="middle" fill="#111">X (1/CM)</text>
  <text transform="translate(41.5,495) rotate(-90)" font-family="Liberation Sans" font-size="13" text-anchor="middle" fill="#222">Y (TRANSMITTANCE)</text>
</svg>
<div class="ytick" style="left:24px;top:179px">1.0e+9</div>
<div class="ytick" style="left:24px;top:291px">9.0e+8</div>
<div class="ytick" style="left:24px;top:403px">8.0e+8</div>
<div class="ytick" style="left:24px;top:515px">7.0e+8</div>
<div class="ytick" style="left:24px;top:627px">6.0e+8</div>
<div class="ytick" style="left:24px;top:739px">5.0e+8</div>
<div class="ytick" style="left:24px;top:851px">4.0e+8</div>
<div class="xtick" style="left:234px">3,500</div>
<div class="xtick" style="left:409px">3,000</div>
<div class="xtick" style="left:584px">2,500</div>
<div class="xtick" style="left:760px">2,000</div>
<div class="xtick" style="left:936px">1,500</div>
<div class="xtick" style="left:1111px">1,000</div>
<div class="xtick" style="left:1287px">500</div>

<!-- right panel -->
<div class="a" style="left:1357px;top:107px;width:445.5px;height:449px;border-radius:4px;box-shadow:0 1px 3px rgba(0,0,0,.2),0 1px 1px rgba(0,0,0,.14),0 2px 1px -1px rgba(0,0,0,.12);background:#fff;overflow:hidden">
  <div class="a" style="left:0;top:0;width:446px;height:65px;background:#eeeeee;border-bottom:1px solid #dcdcdc"></div>
  <div class="a" style="left:25px;top:25px;font-size:12px;color:#333;line-height:14px">Info</div>
  <svg class="a" style="left:406px;top:24.5px" width="16" height="16" viewBox="0 0 16 16"><path d="M2.5 10.5L8 5L13.5 10.5" fill="none" stroke="#666" stroke-width="2"/></svg>
  <div class="a" style="left:26px;top:76px;font-size:14px;color:#222;line-height:16px;white-space:nowrap"><b>Title :</b> <span style="color:#444">File010</span></div>
  <div class="a" style="left:0;top:100px;width:446px;height:1px;background:#e6e6e6"></div>
  <div class="a" style="left:0;top:356px;width:446px;height:44px;background:#f8f8f8;border-top:1px solid #ececec"></div>
  <div class="a" style="left:0;top:400px;width:446px;height:49px;background:#eeeeee"></div>
  <div class="a" style="left:25px;top:418px;font-size:12px;color:#333;line-height:14px;white-space:nowrap">Spectra Comparisons</div>
  <svg class="a" style="left:406px;top:417px" width="16" height="16" viewBox="0 0 16 16"><path d="M2.5 5.5L8 11L13.5 5.5" fill="none" stroke="#666" stroke-width="2"/></svg>
</div>
<svg class="a" style="left:1455px;top:255px" width="250" height="150" viewBox="0 0 1603 962" font-family="Liberation Sans"><path d="M190 440L272 487M272 487L272 585M272 585L190 632M190 632L105 585M105 585L105 487M105 487L190 440M200 463L247 490M247 582L200 609M120 564L120 508M355 720L440 767M440 767L440 865M440 865L355 915M355 915L275 865M275 865L275 767M275 767L355 720M366 743L415 770M415 862L366 891M290 844L290 788M272 585L338 628M355 658L355 720M190 632L190 727M190 727L275 767M190 727L125 735M190 727L160 790M520 443L605 490M605 490L605 582M605 582L520 630M520 630L440 582M440 582L440 490M440 490L520 443M531 466L580 493M580 580L531 607M455 562L455 510M375 628L440 582M605 490L690 445M690 445L697 368M718 348L805 325M805 325L835 398M832 430L795 478M760 488L690 445M802 354L822 398M760 464L718 443M690 338L645 270M645 270L658 200M685 178L765 150M765 150L812 225M818 258L805 325M667 250L675 216M540 290L513 382M513 382L420 405M420 405L354 336M354 336L381 244M381 244L474 221M474 221L540 290M490 372L437 386M374 321L389 268M477 246L515 286M645 270L540 290M765 150L795 98M828 82L885 97M905 118L910 190M910 190L838 232M790 142L808 112M890 130L892 169M1080 195L1165 240M1165 240L1165 338M1165 338L1080 385M1080 385L995 338M995 338L995 240M995 240L1080 195M1090 218L1139 243M1139 335L1090 362M1010 317L1010 261M910 190L995 240M1165 338L1228 378M1410 195L1495 242M1495 242L1495 338M1495 338L1410 385M1410 385L1330 338M1330 338L1330 242M1330 242L1410 195M1421 218L1470 245M1470 335L1421 362M1345 318L1345 262M1245 485L1330 530M1330 530L1330 625M1330 625L1245 672M1245 672L1165 625M1165 625L1165 530M1165 530L1245 485M1256 507L1305 533M1305 622L1256 649M1180 605L1180 550M1262 378L1330 338M1410 385L1410 485M1410 485L1330 530M1245 408L1245 485M1410 485L1480 485M1410 485L1440 540" stroke="#111" stroke-width="7" fill="none"/><text x="665" y="196" font-size="34" text-anchor="middle" fill="#111" font-weight="bold">N</text><text x="700" y="363" font-size="34" text-anchor="middle" fill="#111" font-weight="bold">N</text><text x="820" y="251" font-size="34" text-anchor="middle" fill="#111" font-weight="bold">N</text><text x="845" y="426" font-size="34" text-anchor="middle" fill="#111" font-weight="bold">N</text><text x="778" y="499" font-size="34" text-anchor="middle" fill="#111" font-weight="bold">N</text><text x="805" y="93" font-size="34" text-anchor="middle" fill="#111" font-weight="bold">N</text><text x="905" y="113" font-size="34" text-anchor="middle" fill="#111" font-weight="bold">N</text><text x="355" y="651" font-size="34" text-anchor="middle" fill="#111" font-weight="bold">N</text><text x="1245" y="401" font-size="34" text-anchor="middle" fill="#111" font-weight="bold">N</text><text x="68" y="752" font-size="36" text-anchor="middle" fill="#111" font-weight="bold">H<tspan font-size="26" dy="6">3</tspan><tspan dy="-6">C</tspan></text><text x="116" y="834" font-size="36" text-anchor="middle" fill="#111" font-weight="bold">H<tspan font-size="26" dy="6">3</tspan><tspan dy="-6">C</tspan></text><text x="1532" y="502" font-size="36" text-anchor="middle" fill="#111" font-weight="bold">CH<tspan font-size="26" dy="6">3</tspan></text><text x="1487" y="587" font-size="36" text-anchor="middle" fill="#111" font-weight="bold">CH<tspan font-size="26" dy="6">3</tspan></text></svg>
</body></html>
